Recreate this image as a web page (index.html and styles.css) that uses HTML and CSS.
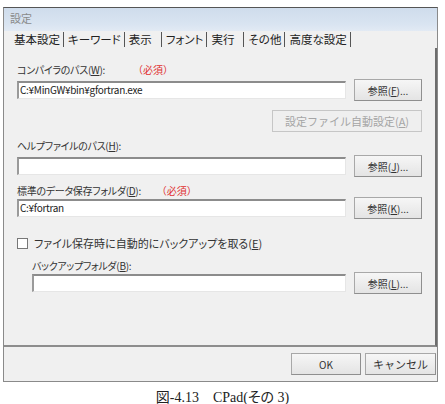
FILE: index.html
```html
<!DOCTYPE html>
<html lang="ja">
<head>
    <meta charset="UTF-8">
    <meta name="viewport" content="width=device-width, initial-scale=1.0">
    <title>設定</title>
    <link rel="stylesheet" href="styles.css">
</head>
<body>
    <div class="window">
        <div class="titlebar">設定</div>
        <div class="tabs">
            <span class="tab active">基本設定</span>
            <span class="tab">キーワード</span>
            <span class="tab">表示</span>
            <span class="tab">フォント</span>
            <span class="tab">実行</span>
            <span class="tab">その他</span>
            <span class="tab">高度な設定</span>
        </div>
        <div class="panel">
            <div class="label first">コンパイラのパス(<u>W</u>): <span class="required">（必須）</span></div>
            <div class="row">
                <div class="input">C:¥MinGW¥bin¥gfortran.exe</div>
                <button class="btn">参照(<u>F</u>)...</button>
            </div>
            <div class="row-right">
                <button class="btn wide" disabled>設定ファイル自動設定(<u>A</u>)</button>
            </div>
            <div class="label">ヘルプファイルのパス(<u>H</u>):</div>
            <div class="row">
                <div class="input"></div>
                <button class="btn">参照(<u>J</u>)...</button>
            </div>
            <div class="label">標準のデータ保存フォルダ(<u>D</u>): <span class="required">（必須）</span></div>
            <div class="row tight">
                <div class="input">C:¥fortran</div>
                <button class="btn">参照(<u>K</u>)...</button>
            </div>
            <label class="check"><span class="box"></span>ファイル保存時に自動的にバックアップを取る(<u>E</u>)</label>
            <div class="indent">
                <div class="label">バックアップフォルダ(<u>B</u>):</div>
                <div class="row tight">
                    <div class="input"></div>
                    <button class="btn">参照(<u>L</u>)...</button>
                </div>
            </div>
        </div>
        <div class="footer">
            <button class="btn ok">OK</button>
            <button class="btn cancel">キャンセル</button>
        </div>
    </div>
    <p class="caption">図-4.13　CPad(その 3)</p>
</body>
</html>
```

FILE: styles.css
```css
body {
    margin: 0;
    background-color: #fff;
    font-family: "Noto Sans CJK JP", "DejaVu Sans", sans-serif;
    font-feature-settings: "palt";
    color: #333;
}
.window {
    margin: 7px 0 0 3px;
    width: 435px;
    height: 375px;
    border: 1px solid #8a8a8a;
    border-top-color: #555;
    background-color: #f0f0f0;
    display: flex;
    flex-direction: column;
    box-sizing: border-box;
}
.titlebar {
    height: 23px;
    line-height: 21px;
    padding-left: 6px;
    font-size: 11px;
    color: #8a8a8a;
    background: linear-gradient(#cfdcec, #d9e4f1 70%, #e2eaf4);
}
.tabs {
    height: 17px;
    display: flex;
    align-items: center;
    padding-left: 6px;
}
.tab {
    font-size: 11.5px;
    line-height: 15px;
    padding: 0 3px 0 4px;
    border-right: 1px solid #555;
    color: #222;
}
.tab:nth-child(3) { padding-right: 9px; }
.tab:nth-child(5) { padding-right: 9px; }
.panel {
    flex: 1;
    border-right: 2px solid #6d6d6d;
    border-bottom: 2px solid #8d8d8d;
    padding-left: 13px;
    font-size: 11px;
}
.label {
    height: 13px;
    line-height: 13px;
    margin-top: 7px;
    font-size: 10px;
    letter-spacing: -0.3px;
    color: #333;
}
.label.first {
    margin-top: 15px;
}
.required {
    color: #e03030;
    font-feature-settings: normal;
    letter-spacing: 0;
    margin-left: 26px;
}
.label:not(.first) .required {
    margin-left: 14px;
}
.row {
    display: flex;
    align-items: center;
    gap: 8px;
    margin-top: 3px;
    height: 22px;
}
.row.tight {
    margin-top: 0;
}
.input {
    width: 329px;
    height: 18px;
    box-sizing: border-box;
    background-color: #fff;
    border: 1px solid #e6e6e6;
    border-top: 2px solid #8c8c8c;
    border-left: 2px solid #9a9a9a;
    padding-left: 1px;
    font-size: 10px;
    letter-spacing: -0.3px;
    line-height: 14px;
    color: #222;
}
.indent .input {
    width: 314px;
}
.btn {
    width: 68px;
    height: 22px;
    padding: 0;
    font-family: inherit;
    font-size: 10px;
    color: #333;
    background: linear-gradient(#f6f6f6, #e4e4e4);
    border: 1px solid #a8a8a8;
    border-right-color: #8f8f8f;
    border-bottom-color: #8f8f8f;
}
.btn:disabled {
    color: #a5a5a5;
    border-color: #c6c6c6;
    background: #efefef;
}
.row-right {
    margin-top: 9px;
    width: 405px;
    display: flex;
    justify-content: flex-end;
}
.btn.wide {
    width: 150px;
    font-size: 11px;
}
.check {
    display: flex;
    align-items: center;
    margin-top: 18px;
    height: 13px;
    line-height: 13px;
}
.box {
    width: 9px;
    height: 9px;
    border: 1px solid #777;
    background-color: #fff;
    margin-right: 6px;
}
.indent {
    padding-left: 15px;
}
.indent .label {
    margin-top: 9px;
}
.footer {
    height: 34px;
    display: flex;
    justify-content: flex-end;
    align-items: center;
    gap: 4px;
    padding-right: 1px;
}
.btn.ok {
    width: 70px;
}
.btn.cancel {
    width: 71px;
    font-size: 11px;
}
.caption {
    margin: 8px 0 0;
    text-align: center;
    font-family: "Liberation Serif", "Noto Sans CJK JP", serif;
    font-size: 14px;
    line-height: 16px;
    color: #222;
}
```
